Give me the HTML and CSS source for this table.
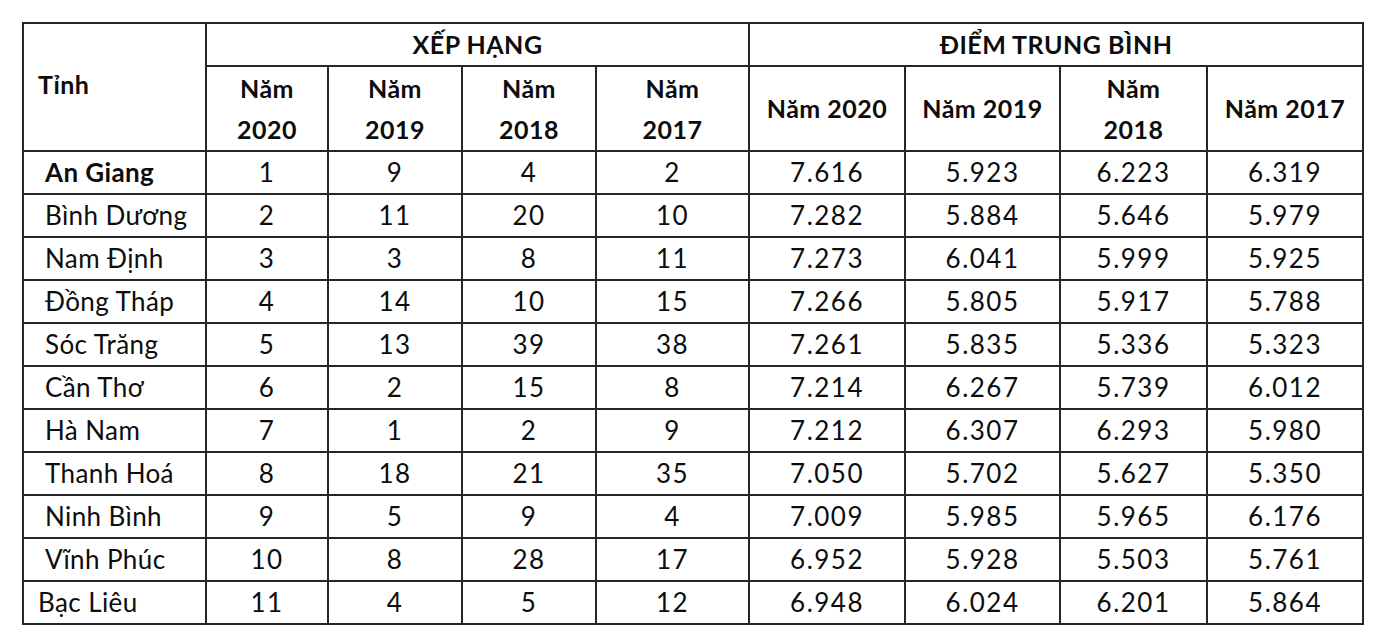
FILE: index.html
```html
<!DOCTYPE html>
<html lang="vi">
<head>
<meta charset="utf-8">
<title>Xếp hạng</title>
<link rel="stylesheet" href="styles.css">
</head>
<body>
<table class="grid">
  <colgroup>
    <col class="c0"><col class="c1"><col class="c2"><col class="c3"><col class="c4">
    <col class="c5"><col class="c6"><col class="c7"><col class="c8">
  </colgroup>
  <thead>
    <tr class="h1">
      <th rowspan="2" class="tinh">Tỉnh</th>
      <th colspan="4">XẾP HẠNG</th>
      <th colspan="4">ĐIỂM TRUNG BÌNH</th>
    </tr>
    <tr class="h2">
      <th>Năm<br>2020</th>
      <th>Năm<br>2019</th>
      <th>Năm<br>2018</th>
      <th>Năm<br>2017</th>
      <th>Năm 2020</th>
      <th>Năm 2019</th>
      <th>Năm<br>2018</th>
      <th>Năm 2017</th>
    </tr>
  </thead>
  <tbody>
    <tr><td class="name bold">An Giang</td><td>1</td><td>9</td><td>4</td><td>2</td><td>7.616</td><td>5.923</td><td>6.223</td><td>6.319</td></tr>
    <tr><td class="name">Bình Dương</td><td>2</td><td>11</td><td>20</td><td>10</td><td>7.282</td><td>5.884</td><td>5.646</td><td>5.979</td></tr>
    <tr><td class="name">Nam Định</td><td>3</td><td>3</td><td>8</td><td>11</td><td>7.273</td><td>6.041</td><td>5.999</td><td>5.925</td></tr>
    <tr><td class="name">Đồng Tháp</td><td>4</td><td>14</td><td>10</td><td>15</td><td>7.266</td><td>5.805</td><td>5.917</td><td>5.788</td></tr>
    <tr><td class="name">Sóc Trăng</td><td>5</td><td>13</td><td>39</td><td>38</td><td>7.261</td><td>5.835</td><td>5.336</td><td>5.323</td></tr>
    <tr><td class="name">Cần Thơ</td><td>6</td><td>2</td><td>15</td><td>8</td><td>7.214</td><td>6.267</td><td>5.739</td><td>6.012</td></tr>
    <tr><td class="name">Hà Nam</td><td>7</td><td>1</td><td>2</td><td>9</td><td>7.212</td><td>6.307</td><td>6.293</td><td>5.980</td></tr>
    <tr><td class="name">Thanh Hoá</td><td>8</td><td>18</td><td>21</td><td>35</td><td>7.050</td><td>5.702</td><td>5.627</td><td>5.350</td></tr>
    <tr><td class="name">Ninh Bình</td><td>9</td><td>5</td><td>9</td><td>4</td><td>7.009</td><td>5.985</td><td>5.965</td><td>6.176</td></tr>
    <tr><td class="name">Vĩnh Phúc</td><td>10</td><td>8</td><td>28</td><td>17</td><td>6.952</td><td>5.928</td><td>5.503</td><td>5.761</td></tr>
    <tr><td class="name short">Bạc Liêu</td><td>11</td><td>4</td><td>5</td><td>12</td><td>6.948</td><td>6.024</td><td>6.201</td><td>5.864</td></tr>
  </tbody>
</table>
</body>
</html>
```
FILE: styles.css
```css
html, body {
  margin: 0;
  padding: 0;
  background: #ffffff;
}
body {
  padding: 22px 0 0 22px;
  font-family: Lato, "Liberation Sans", sans-serif;
  color: #0d0d0d;
}
.grid {
  border-collapse: collapse;
  table-layout: fixed;
  width: 1342px;
}
.c0 { width: 183px; }
.c1 { width: 122px; }
.c2 { width: 134px; }
.c3 { width: 134px; }
.c4 { width: 153px; }
.c5 { width: 156px; }
.c6 { width: 155px; }
.c7 { width: 147px; }
.c8 { width: 156px; }
.grid th, .grid td {
  border: 2px solid #262626;
  padding: 0;
  text-align: center;
  vertical-align: middle;
}
.grid th {
  font-weight: 700;
  font-size: 25px;
  line-height: 41px;
  letter-spacing: 0.5px;
}
.grid td {
  font-size: 26px;
  height: 41px;
  line-height: 41px;
  letter-spacing: 1.5px;
}
.h1 th { height: 41px; }
.h2 th { height: 83px; }
.grid th.tinh {
  text-align: left;
  padding-left: 14px;
  vertical-align: middle;
  padding-bottom: 6px;
}
.grid td.name {
  text-align: left;
  padding-left: 21px;
  letter-spacing: 0.4px;
}
.grid td.short { padding-left: 14px; }
.grid td.bold { font-weight: 700; }
```
